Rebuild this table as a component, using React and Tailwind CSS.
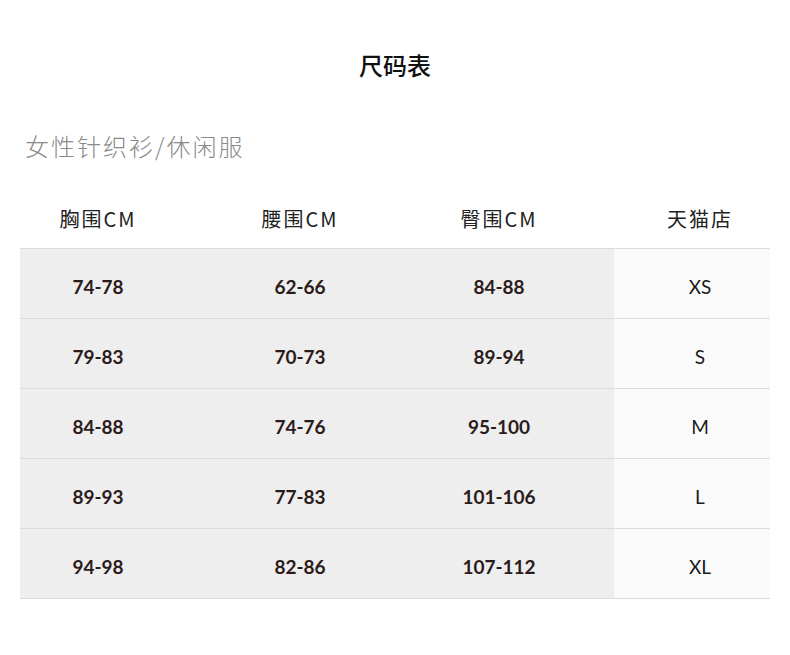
import React from 'react';

const rows = [
  ['74-78', '62-66', '84-88', 'XS'],
  ['79-83', '70-73', '89-94', 'S'],
  ['84-88', '74-76', '95-100', 'M'],
  ['89-93', '77-83', '101-106', 'L'],
  ['94-98', '82-86', '107-112', 'XL'],
];

const cjk = { fontFamily: '"Noto Sans CJK SC", "Noto Sans", sans-serif' };
const num = { fontFamily: 'Lato, "Noto Sans CJK SC", sans-serif' };

const App = () => {
  return (
    <div className="w-[790px] h-[655px] bg-white" style={cjk}>
      {/* Title */}
      <div className="pt-[49px]">
        <h1 className="h-[32px] leading-[32px] text-center text-[24px] font-medium text-[#111]">尺码表</h1>
      </div>

      <p className="mt-[49px] pl-[25px] h-[32px] leading-[32px] text-[24px] tracking-[2px] text-[#8a8a8a] font-light">
        女性针织衫/休闲服
      </p>

      <div className="mt-[28px] mx-[20px]">
        {/* Header */}
        <div className="grid grid-cols-[156px_248px_190px_156px] h-[59px] items-center text-[20px] text-[#222] tracking-[2px] border-b border-[#dcdcdc]">
          <div className="text-center">胸围CM</div>
          <div className="text-center">腰围CM</div>
          <div className="text-center pr-[40px]">臀围CM</div>
          <div className="text-center pl-[16px]">天猫店</div>
        </div>

        {/* Rows */}
        {rows.map((r, i) => (
          <div
            key={i}
            className="grid grid-cols-[156px_248px_190px_156px] h-[70px] border-b border-[#dcdcdc]"
            style={num}
          >
            <div className="bg-[#eeeeee] flex items-center justify-center pt-[7px] text-[19px] font-bold text-[#2b1b1b]">{r[0]}</div>
            <div className="bg-[#eeeeee] flex items-center justify-center pt-[7px] text-[19px] font-bold text-[#2b1b1b]">{r[1]}</div>
            <div className="bg-[#eeeeee] flex items-center justify-center pt-[7px] pr-[40px] text-[19px] font-bold text-[#2b1b1b]">{r[2]}</div>
            <div className="bg-[#fafafa] flex items-center justify-center pt-[7px] pl-[16px] text-[19px] text-[#1a1a1a]">{r[3]}</div>
          </div>
        ))}
      </div>
    </div>
  );
};

export default App;
